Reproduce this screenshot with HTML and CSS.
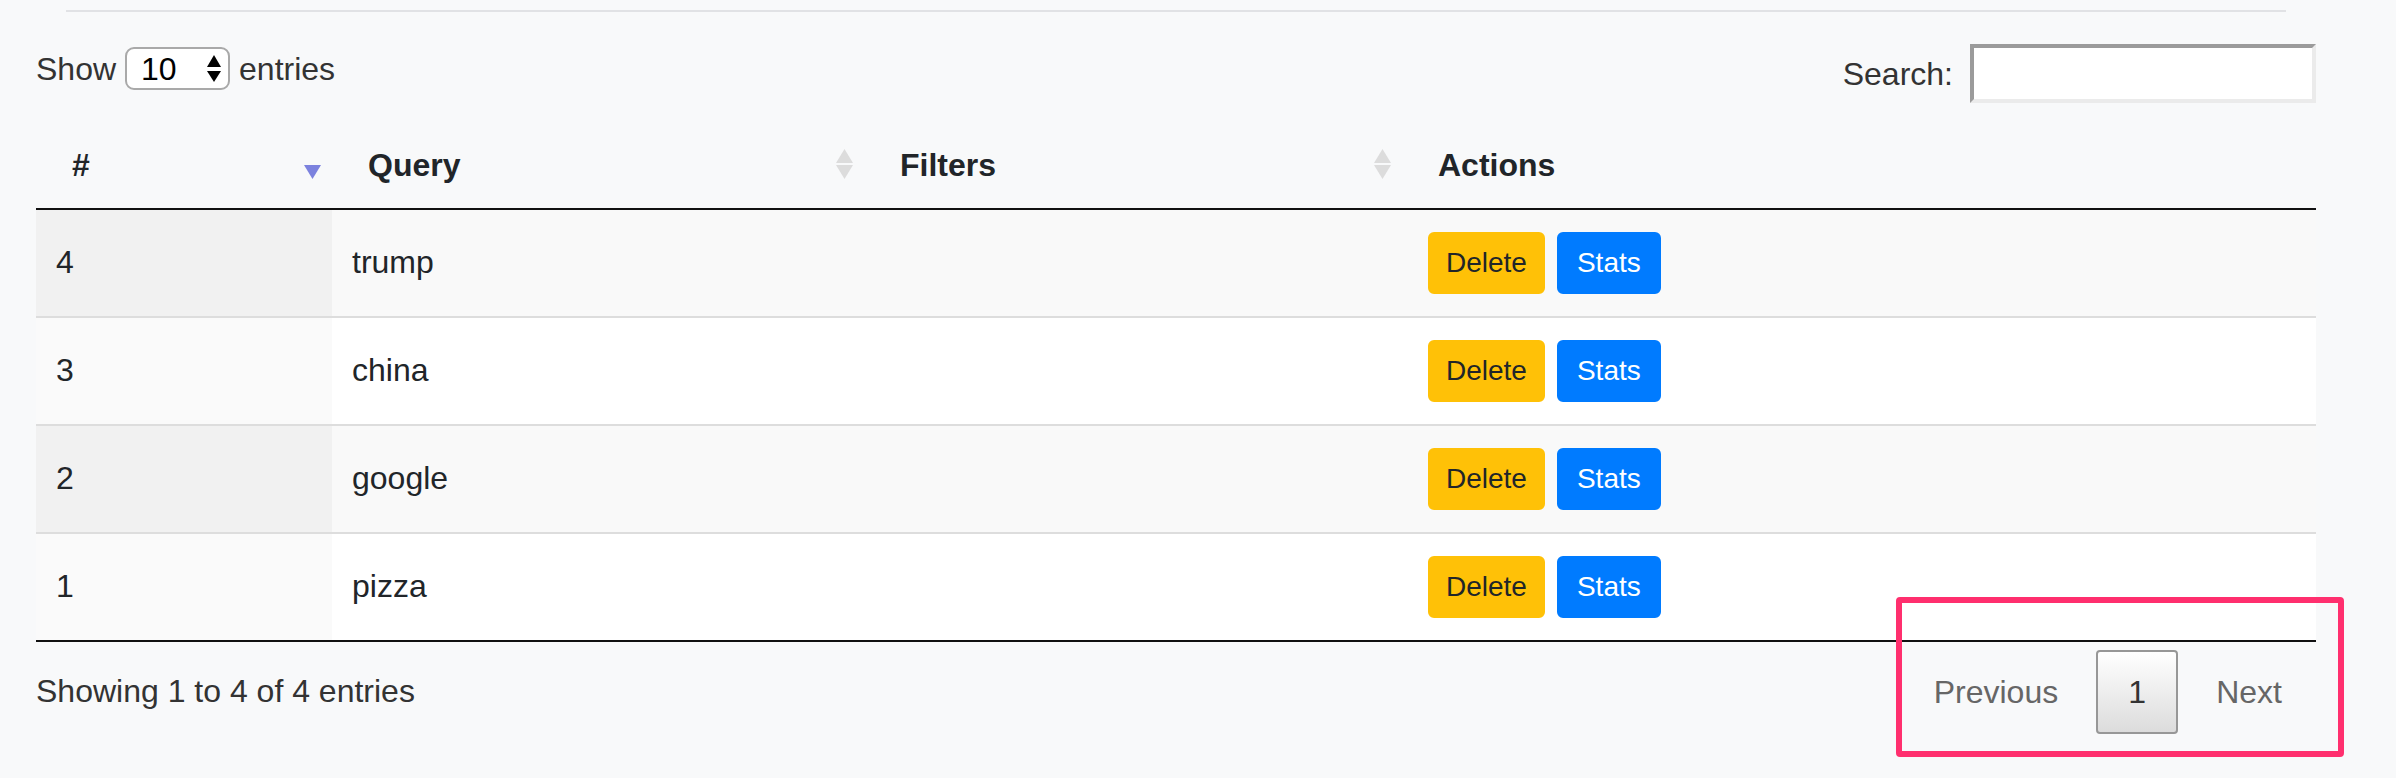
FILE: index.html
```html
<!DOCTYPE html>
<html lang="en">
<head>
<meta charset="utf-8">
<title>Queries</title>
<link rel="stylesheet" href="styles.css">
</head>
<body>
<div class="page">
  <hr class="rule">
  <div class="controls">
    <div class="length">
      <span>Show</span>
      <span class="select"><span class="select-value">10</span><svg class="select-arrows" width="14" height="28" viewBox="0 0 14 28"><polygon points="7,0 14,12 0,12" fill="#000"/><polygon points="0,16 14,16 7,27" fill="#000"/></svg></span>
      <span>entries</span>
    </div>
    <label class="filter"><span>Search:</span><input type="search" class="filter-input"></label>
  </div>

  <table class="data">
    <colgroup>
      <col class="c-id"><col class="c-query"><col class="c-filters"><col class="c-actions">
    </colgroup>
    <thead>
      <tr>
        <th class="sortable"><div class="th-in"><span>#</span><svg width="17" height="30" viewBox="0 0 17 30"><polygon points="0,16 17,16 8.5,30" fill="#7c82de"/></svg></div></th>
        <th class="sortable"><div class="th-in"><span>Query</span><svg width="17" height="30" viewBox="0 0 17 30"><polygon points="8.5,0 17,14 0,14" fill="#dcdcdc"/><polygon points="0,16 17,16 8.5,30" fill="#dcdcdc"/></svg></div></th>
        <th class="sortable"><div class="th-in"><span>Filters</span><svg width="17" height="30" viewBox="0 0 17 30"><polygon points="8.5,0 17,14 0,14" fill="#dcdcdc"/><polygon points="0,16 17,16 8.5,30" fill="#dcdcdc"/></svg></div></th>
        <th><div class="th-in"><span>Actions</span></div></th>
      </tr>
    </thead>
    <tbody>
      <tr class="odd">
        <td class="sorted">4</td><td>trump</td><td></td>
        <td class="actions"><div class="btns"><button class="btn btn-warning">Delete</button><button class="btn btn-primary">Stats</button></div></td>
      </tr>
      <tr class="even">
        <td class="sorted">3</td><td>china</td><td></td>
        <td class="actions"><div class="btns"><button class="btn btn-warning">Delete</button><button class="btn btn-primary">Stats</button></div></td>
      </tr>
      <tr class="odd">
        <td class="sorted">2</td><td>google</td><td></td>
        <td class="actions"><div class="btns"><button class="btn btn-warning">Delete</button><button class="btn btn-primary">Stats</button></div></td>
      </tr>
      <tr class="even">
        <td class="sorted">1</td><td>pizza</td><td></td>
        <td class="actions"><div class="btns"><button class="btn btn-warning">Delete</button><button class="btn btn-primary">Stats</button></div></td>
      </tr>
    </tbody>
  </table>

  <div class="footer">
    <div class="info">Showing 1 to 4 of 4 entries</div>
    <div class="paginate">
      <span class="page-btn disabled">Previous</span>
      <span class="page-btn current">1</span>
      <span class="page-btn disabled">Next</span>
    </div>
  </div>
</div>
<div class="highlight"></div>
</body>
</html>
```

FILE: styles.css
```css
html, body {
  margin: 0;
  padding: 0;
}

body {
  background: #f8f9fa;
  font-family: "Liberation Sans", Arial, Helvetica, sans-serif;
  font-size: 32px;
  line-height: 48px;
  color: #212529;
}

.page {
  width: 2280px;
  margin: 0 0 0 36px;
  padding-top: 10px;
}

.rule {
  margin: 0 30px;
  height: 0;
  border: 0;
  border-top: 2px solid #e1e2e5;
}

.controls {
  display: flex;
  justify-content: space-between;
  align-items: flex-start;
  margin-top: 32px;
  color: #333;
}

.length {
  display: flex;
  align-items: center;
  gap: 9px;
  height: 43px;
  margin-top: 3px;
}

.select {
  box-sizing: border-box;
  width: 105px;
  height: 43px;
  border: 2px solid #a9a9a9;
  border-radius: 9px;
  background: #fff;
  display: flex;
  align-items: center;
  padding-left: 14px;
  padding-right: 7px;
  color: #000;
}

.select-arrows {
  margin-left: auto;
  display: block;
}

.filter {
  display: flex;
  align-items: center;
  gap: 17px;
}

.filter-input {
  box-sizing: border-box;
  width: 346px;
  height: 59px;
  margin: 0;
  padding: 0 8px;
  background: #fff;
  border-style: solid;
  border-width: 4px;
  border-color: #9b9b9b #ebebeb #ebebeb #9b9b9b;
  font-family: inherit;
  font-size: 32px;
  outline: none;
}

.data {
  width: 100%;
  margin-top: 17px;
  border-collapse: separate;
  border-spacing: 0;
  table-layout: fixed;
}

.c-id { width: 296px; }
.c-query { width: 532px; }
.c-filters { width: 538px; }
.c-actions { width: auto; }

.data th {
  text-align: left;
  font-weight: bold;
  padding: 21px 11px 19px 36px;
  border-bottom: 2px solid #111;
  color: #212529;
}

.th-in {
  display: flex;
  align-items: center;
  justify-content: space-between;
  height: 48px;
}

.th-in svg {
  display: block;
  position: relative;
  top: -1px;
}

.data td {
  padding: 21px 20px 23px;
  line-height: 62px;
  vertical-align: top;
  color: #212529;
}

.data tbody tr + tr td {
  border-top: 2px solid #ddd;
}

.data tbody tr:last-child td {
  border-bottom: 2px solid #111;
}

.data tr.odd td { background: #f9f9f9; }
.data tr.odd td.sorted { background: #f1f1f1; }
.data tr.even td { background: #fff; }
.data tr.even td.sorted { background: #fafafa; }

.data td.actions {
  padding: 22px 20px 22px 26px;
}

.btns {
  display: flex;
  gap: 12px;
}

.btn {
  box-sizing: border-box;
  height: 62px;
  padding: 0 16px;
  border: 2px solid transparent;
  border-radius: 6px;
  font-family: inherit;
  font-size: 28px;
  line-height: 56px;
  cursor: pointer;
}

.btn-warning {
  background: #ffc107;
  border-color: #ffc107;
  color: #212529;
}

.btn-primary {
  background: #007bff;
  border-color: #007bff;
  color: #fff;
  padding: 0 18px;
}

.footer {
  display: flex;
  justify-content: space-between;
  align-items: flex-start;
}

.info {
  padding-top: 25px;
  color: #333;
}

.paginate {
  display: flex;
  margin-top: 8px;
}

.page-btn {
  box-sizing: border-box;
  display: block;
  height: 84px;
  padding: 16px 32px;
  margin-left: 4px;
  border: 2px solid transparent;
  border-radius: 4px;
  color: #666;
}

.page-btn.current {
  width: 82px;
  padding: 16px 0;
  text-align: center;
  color: #333;
  border-color: #979797;
  background: linear-gradient(to bottom, #ffffff 0%, #dcdcdc 100%);
}

.highlight {
  position: absolute;
  left: 1896px;
  top: 597px;
  width: 448px;
  height: 160px;
  box-sizing: border-box;
  border: 6px solid #ff2f6e;
  border-radius: 4px;
  pointer-events: none;
}
```
